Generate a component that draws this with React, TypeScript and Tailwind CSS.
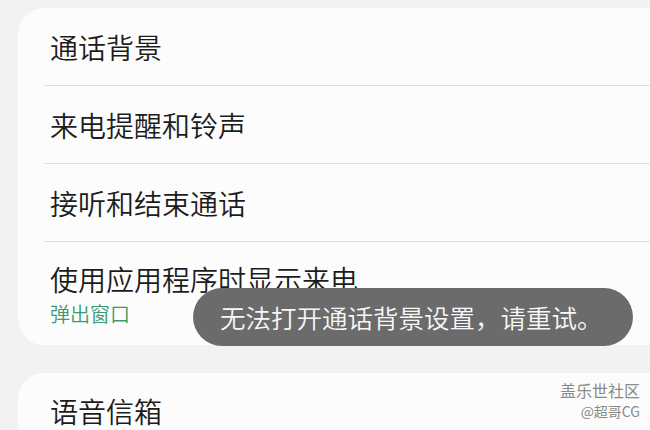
const font = { fontFamily: '"Noto Sans CJK SC", "Noto Sans", sans-serif' }

function Row({ title, sub, last }: { title: string; sub?: string; last?: boolean }) {
  return (
    <div className="flex flex-col">
      <div className={sub ? 'flex flex-col pl-[32px] pt-[18px]' : 'flex h-[77px] items-center pl-[32px]'}>
        <span className="text-[28px] font-[350] leading-[38px] text-[#1c1c1c]">{title}</span>
        {sub && <span className="mt-[-1px] text-[20px] font-[350] leading-[34px] text-[#3b9a6e]">{sub}</span>}
      </div>
      {!last && <div className="ml-[26px] h-px bg-[#dedede]" />}
    </div>
  )
}

export default function App() {
  return (
    <div className="relative h-[430px] w-[650px] overflow-hidden bg-[#f2f2f2]" style={font}>
      <div className="flex flex-col gap-[28px] pl-[18px] pt-[8px]">
        <div className="flex h-[337px] w-[680px] flex-col rounded-[26px] bg-[#fcfcfc]">
          <Row title="通话背景" />
          <Row title="来电提醒和铃声" />
          <Row title="接听和结束通话" />
          <Row title="使用应用程序时显示来电" sub="弹出窗口" last />
        </div>
        <div className="flex h-[80px] w-[680px] flex-col rounded-[26px] bg-[#fcfcfc]">
          <div className="flex h-[76px] items-center pl-[32px]">
            <span className="text-[28px] font-[350] leading-[38px] text-[#1c1c1c]">语音信箱</span>
          </div>
        </div>
      </div>

      {/* toast */}
      <div className="absolute left-[193px] top-[288px] flex h-[58px] w-[440px] items-center rounded-full bg-[#6b6b6b] pl-[27px]">
        <span className="whitespace-nowrap text-[25.5px] font-[350] leading-none text-[#f7f7f7]">无法打开通话背景设置，请重试。</span>
      </div>

      {/* watermark */}
      <div className="absolute right-[10px] top-[379px] flex flex-col items-end text-[#8a8a8a]">
        <span className="text-[16px] leading-[22px]">盖乐世社区</span>
        <span className="text-[14px] leading-[20px]">@超哥CG</span>
      </div>
    </div>
  )
}
